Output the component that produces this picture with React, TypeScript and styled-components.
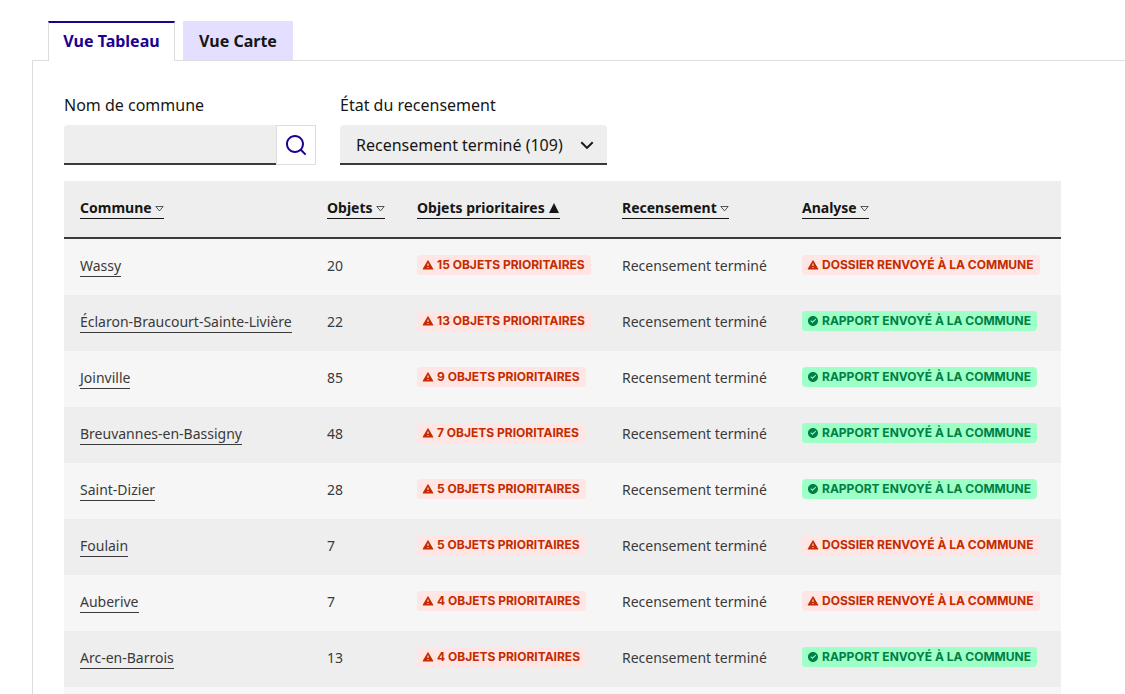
import React from "react";
import styled, { createGlobalStyle } from "styled-components";

const GlobalStyle = createGlobalStyle`
  *, *::before, *::after { box-sizing: border-box; }
  body {
    margin: 0;
    background: #fff;
    color: #161616;
    font-family: "Noto Sans", "Open Sans", sans-serif;
    font-size: 16px;
    line-height: 24px;
  }
`;

const Page = styled.main`
  padding: 21px 0 0 32px;
`;

const TabList = styled.div`
  display: flex;
  gap: 8px;
  padding: 0 16px;
  margin-bottom: -1px;
`;

const Tab = styled.button<{ $active?: boolean }>`
  height: 40px;
  min-width: ${(p) => (p.$active ? 127 : 110)}px;
  padding: ${(p) => (p.$active ? "0 14px 2px" : "0 15px")};
  border: ${(p) => (p.$active ? "1px solid #ddd" : "0")};
  border-top: ${(p) => (p.$active ? "2px solid #200090" : "0")};
  border-bottom: ${(p) => (p.$active ? "0" : "1px solid #ddd")};
  background: ${(p) => (p.$active ? "#fff" : "#e5dfff")};
  color: ${(p) => (p.$active ? "#200090" : "#161616")};
  font: inherit;
  font-weight: 700;
  white-space: nowrap;
  cursor: pointer;
`;

const Panel = styled.section`
  padding: 32px 64px 0 31px;
  border-top: 1px solid #ddd;
  border-left: 1px solid #ddd;
`;

const Filters = styled.form`
  display: flex;
  gap: 24px;
  margin-bottom: 16px;
`;

const Field = styled.div`
  display: flex;
  flex-direction: column;
  gap: 8px;
`;

const SearchBar = styled.div`
  display: flex;
  width: 252px;
`;

const SearchInput = styled.input`
  flex: 1;
  min-width: 0;
  height: 40px;
  padding: 0 16px;
  border: 0;
  border-bottom: 2px solid #3a3a3a;
  border-radius: 4px 0 0 0;
  background: #eee;
  font: inherit;
`;

const SearchButton = styled.button`
  display: flex;
  align-items: center;
  justify-content: center;
  width: 40px;
  height: 40px;
  padding: 0;
  border: 1px solid #ddd;
  background: #fff;
  color: #200090;
  cursor: pointer;
`;

const SelectWrap = styled.div`
  display: grid;
  align-items: center;
  width: 267px;

  > * { grid-area: 1 / 1; }
  > svg { justify-self: end; margin-right: 10px; pointer-events: none; }
`;

const Select = styled.select`
  width: 100%;
  height: 40px;
  padding: 2px 36px 0 16px;
  appearance: none;
  border: 0;
  border-bottom: 2px solid #3a3a3a;
  border-radius: 4px 4px 0 0;
  background: #eee;
  color: #161616;
  font: inherit;
`;

const Table = styled.table`
  width: 100%;
  table-layout: fixed;
  border-collapse: separate;
  border-spacing: 0;
  font-size: 14px;
  color: #3a3a3a;
`;

const Col = styled.col<{ $width?: number }>`
  width: ${(p) => (p.$width ? `${p.$width}px` : "auto")};
`;

const HeadCell = styled.th`
  height: 58px;
  padding: 15px 16px;
  border-bottom: 2px solid #3a3a3a;
  background: #eee;
  color: #161616;
  text-align: left;
  vertical-align: top;
  white-space: nowrap;
`;

const Row = styled.tr`
  background: #f6f6f6;
  &:nth-child(even) { background: #eee; }
`;

const Cell = styled.td`
  height: 56px;
  padding: 15px 16px;
  vertical-align: top;
  white-space: nowrap;
`;

const BadgeCell = styled(Cell)`
  padding: 16px 0 16px 16px;
`;

const TableLink = styled.a`
  display: inline-flex;
  align-items: center;
  gap: 3px;
  border-bottom: 1px solid currentColor;
  color: inherit;
  line-height: 20px;
  text-decoration: none;
`;

const Badge = styled.span<{ $tone: "warning" | "success" }>`
  display: inline-flex;
  align-items: center;
  gap: 3px;
  height: 20px;
  padding: 0 6px 0 5px;
  border-radius: 4px;
  vertical-align: top;
  background: ${(p) => (p.$tone === "success" ? "#9effc7" : "#ffe5e3")};
  color: ${(p) => (p.$tone === "success" ? "#007f46" : "#c22c00")};
  font-family: Inter, "Noto Sans", sans-serif;
  font-size: 12px;
  font-weight: 700;
  line-height: 20px;
  text-transform: uppercase;
`;

const WarningIcon = () => (
  <svg width="12" height="12" viewBox="0 0 24 24" fill="currentColor" aria-hidden="true">
    <path d="m12.866 3 9.526 16.5a1 1 0 0 1-.866 1.5H2.474a1 1 0 0 1-.866-1.5L11.134 3a1 1 0 0 1 1.732 0ZM11 16v2h2v-2h-2Zm0-7v5h2V9h-2Z" />
  </svg>
);

const SuccessIcon = () => (
  <svg width="12" height="12" viewBox="0 0 24 24" fill="currentColor" aria-hidden="true">
    <path d="M12 22C6.477 22 2 17.523 2 12S6.477 2 12 2s10 4.477 10 10-4.477 10-10 10Zm-.997-6 7.07-7.071-1.414-1.414-5.656 5.657-2.829-2.829-1.414 1.414L11.003 16Z" />
  </svg>
);

const SearchIcon = () => (
  <svg width="24" height="24" viewBox="0 0 24 24" fill="currentColor" aria-hidden="true">
    <path d="m18.031 16.617 4.283 4.282-1.415 1.415-4.282-4.283A8.96 8.96 0 0 1 11 20c-4.968 0-9-4.032-9-9s4.032-9 9-9 9 4.032 9 9a8.96 8.96 0 0 1-1.969 5.617Zm-2.006-.742A6.977 6.977 0 0 0 18 11c0-3.868-3.133-7-7-7-3.868 0-7 3.132-7 7 0 3.867 3.132 7 7 7a6.977 6.977 0 0 0 4.875-1.975l.15-.15Z" />
  </svg>
);

const ChevronIcon = () => (
  <svg width="20" height="20" viewBox="0 0 20 20" aria-hidden="true">
    <path d="m4.3 7.3 5.7 5.6 5.7-5.6" fill="none" stroke="#161616" strokeWidth="2" />
  </svg>
);

const SortIcon = ({ active }: { active?: boolean }) =>
  active ? (
    <svg width="12" height="12" viewBox="0 0 12 12" aria-hidden="true">
      <path d="M6 1 11 11H1Z" fill="#161616" />
    </svg>
  ) : (
    <svg width="9" height="8" viewBox="0 0 9 8" aria-hidden="true">
      <path d="M.8 2.5h7.4L4.5 6.9Z" fill="none" stroke="#161616" strokeWidth=".7" />
    </svg>
  );

const columns = [
  { label: "Commune", width: 247 },
  { label: "Objets", width: 90 },
  { label: "Objets prioritaires", width: 205, sorted: true },
  { label: "Recensement", width: 180 },
  { label: "Analyse" },
];

const communes = [
  { name: "Wassy", objects: 20, priority: 15, sent: false },
  { name: "Éclaron-Braucourt-Sainte-Livière", objects: 22, priority: 13, sent: true },
  { name: "Joinville", objects: 85, priority: 9, sent: true },
  { name: "Breuvannes-en-Bassigny", objects: 48, priority: 7, sent: true },
  { name: "Saint-Dizier", objects: 28, priority: 5, sent: true },
  { name: "Foulain", objects: 7, priority: 5, sent: false },
  { name: "Auberive", objects: 7, priority: 4, sent: false },
  { name: "Arc-en-Barrois", objects: 13, priority: 4, sent: true },
];

export default function App() {
  return (
    <>
      <GlobalStyle />
      <Page>
        <TabList role="tablist">
          <Tab $active type="button" role="tab" id="tab-table" aria-selected="true" aria-controls="panel-table">
            Vue Tableau
          </Tab>
          <Tab type="button" role="tab" aria-selected="false">
            Vue Carte
          </Tab>
        </TabList>
        <Panel role="tabpanel" id="panel-table" aria-labelledby="tab-table">
          <Filters onSubmit={(e) => e.preventDefault()}>
            <Field>
              <label htmlFor="commune">Nom de commune</label>
              <SearchBar>
                <SearchInput id="commune" type="text" />
                <SearchButton type="submit" aria-label="Rechercher">
                  <SearchIcon />
                </SearchButton>
              </SearchBar>
            </Field>
            <Field>
              <label htmlFor="status">État du recensement</label>
              <SelectWrap>
                <Select id="status">
                  <option>Recensement terminé (109)</option>
                </Select>
                <ChevronIcon />
              </SelectWrap>
            </Field>
          </Filters>
          <Table>
            <colgroup>
              {columns.map((c) => (
                <Col key={c.label} $width={c.width} />
              ))}
            </colgroup>
            <thead>
              <tr>
                {columns.map((c) => (
                  <HeadCell key={c.label} scope="col" aria-sort={c.sorted ? "descending" : undefined}>
                    <TableLink href="#">
                      {c.label}
                      <SortIcon active={c.sorted} />
                    </TableLink>
                  </HeadCell>
                ))}
              </tr>
            </thead>
            <tbody>
              {communes.map((c) => (
                <Row key={c.name}>
                  <Cell>
                    <TableLink href="#">{c.name}</TableLink>
                  </Cell>
                  <Cell>{c.objects}</Cell>
                  <BadgeCell>
                    <Badge $tone="warning">
                      <WarningIcon />
                      {c.priority} objets prioritaires
                    </Badge>
                  </BadgeCell>
                  <Cell>Recensement terminé</Cell>
                  <BadgeCell>
                    <Badge $tone={c.sent ? "success" : "warning"}>
                      {c.sent ? <SuccessIcon /> : <WarningIcon />}
                      {c.sent ? "Rapport envoyé à la commune" : "Dossier renvoyé à la commune"}
                    </Badge>
                  </BadgeCell>
                </Row>
              ))}
              <Row>
                <Cell colSpan={5} />
              </Row>
            </tbody>
          </Table>
        </Panel>
      </Page>
    </>
  );
}
